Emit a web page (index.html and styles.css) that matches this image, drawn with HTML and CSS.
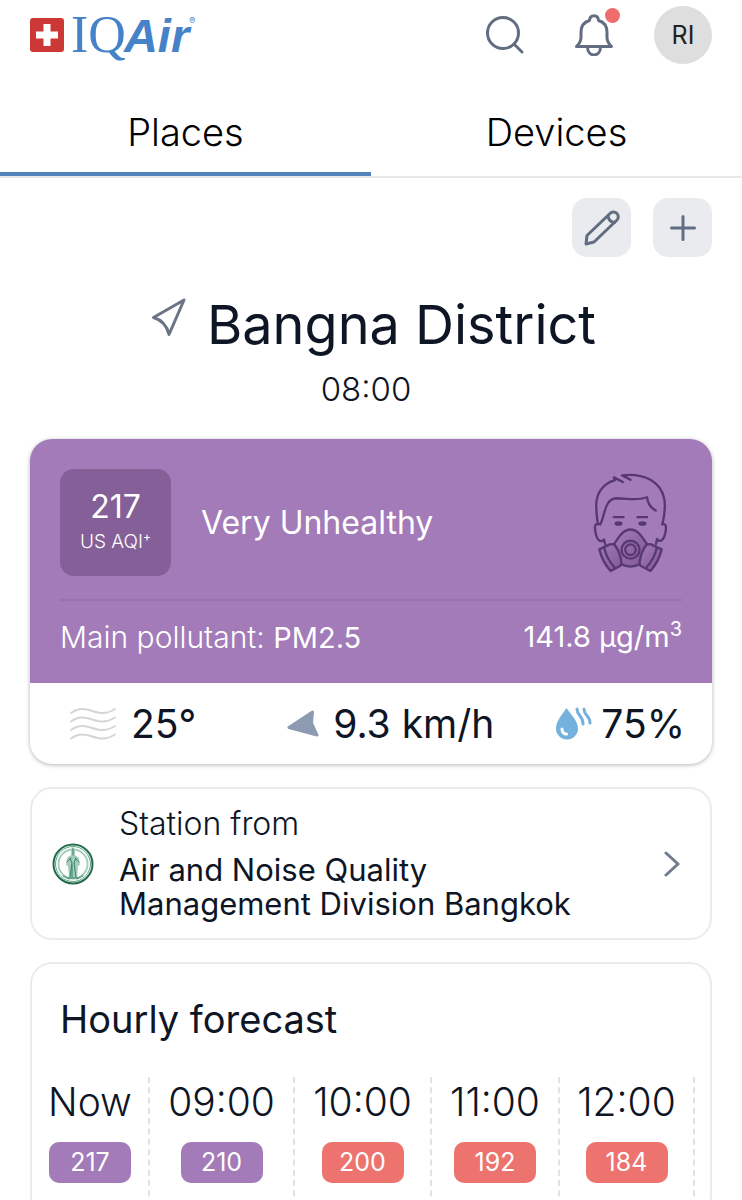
FILE: index.html
```html
<!DOCTYPE html>
<html lang="en">
<head>
  <meta charset="UTF-8">
  <meta name="viewport" content="width=device-width, initial-scale=1.0">
  <title>IQAir</title>
  <link rel="stylesheet" href="styles.css">
</head>
<body>
  <header class="header">
    <a href="#" class="logo">
      <svg class="logo-flag" viewBox="0 0 34 34" aria-hidden="true">
        <rect width="34" height="34" rx="3" fill="#cc3835"/>
        <path d="M13.500 6h7v7.500H28v7h-7.500V28h-7v-7.500H6v-7h7.500z" fill="#fff"/>
      </svg>
      <span class="logo-text"><span class="logo-iq">IQ</span><span class="logo-air">Air</span><sup>®</sup></span>
    </a>
    <div class="header-actions">
      <button class="icon-btn" aria-label="Search">
        <svg width="40" height="40" viewBox="0 0 40 40">
          <circle cx="18" cy="18" r="15.500"/>
          <path d="M29 29l8 8"/>
        </svg>
      </button>
      <button class="icon-btn" aria-label="Notifications">
        <svg width="40" height="42" viewBox="0 0 40 42">
          <path d="M2.500 32.500c3-3 4.500-5 4.500-9v-5C7 12 10 8 15.500 6.500c.5-6.500 8.500-6.500 9 0C30 8 33 12 33 18.500v5c0 4 1.500 6 4.500 9z"/>
          <path d="M13.500 33c0 10.500 13 10.500 13 0"/>
        </svg>
        <span class="dot"></span>
      </button>
      <button class="avatar">RI</button>
    </div>
  </header>

  <nav class="tabs">
    <a href="#" class="tab active">Places</a>
    <a href="#" class="tab">Devices</a>
  </nav>

  <main class="main">
    <div class="toolbar">
      <button class="tool-btn" aria-label="Edit places">
        <svg width="36" height="36" viewBox="0 0 36 36">
          <path d="M2 34l1-8.500L26 3.500a4.600 4.600 0 0 1 7 6.500L10 32z"/>
          <path d="M24 6c.5 4 2.500 6 6.500 6.500"/>
        </svg>
      </button>
      <button class="tool-btn" aria-label="Add place">
        <svg width="36" height="36" viewBox="0 0 36 36">
          <path d="M18 6.500v23M6.500 18h23"/>
        </svg>
      </button>
    </div>

    <section class="location">
      <h1>
        <svg class="location-arrow" viewBox="0 0 36 40" aria-hidden="true">
          <path d="M33 2L2.500 19.500C11 22 16 28 18 36.500z"/>
        </svg>
        Bangna District
      </h1>
      <time>08:00</time>
    </section>

    <section class="aqi-card">
      <div class="aqi-top">
        <div class="aqi-status">
          <div class="aqi-box">
            <span class="aqi-value">217</span>
            <span class="aqi-unit">US AQI<sup>+</sup></span>
          </div>
          <span class="aqi-level">Very Unhealthy</span>
          <svg class="aqi-face" viewBox="96 60 232 308" aria-hidden="true">
            <defs>
              <linearGradient id="mask" x1="0" y1="0" x2="1" y2="1">
                <stop offset="0" stop-color="#a27bb8"/>
                <stop offset="1" stop-color="#7f5698"/>
              </linearGradient>
            </defs>
            <!-- hair and head -->
            <path d="M189 92L162 78l3 8C124 98 106 132 109 172c1 18 2 32 5 47h7"/>
            <path d="M212 85l-25-13c64-8 117 18 127 72 4 26 0 50-6 75"/>
            <path d="M121 219c14-24 12-76 48-78 34 0 60 9 93-3 2 20 12 32 26 40"/>
            <!-- ears and jaw -->
            <path d="M114 219c-13-2-9 15-6 31 3 13 10 22 20 20l4-5 4 15"/>
            <path d="M308 219c14-3 12 15 8 30-3 14-9 22-19 20l-5-5-3 14"/>
            <path d="M162 198h29M233 198h29"/>
            <g class="solid">
              <ellipse cx="176" cy="217" rx="12" ry="7"/>
              <ellipse cx="248" cy="217" rx="12" ry="7"/>
            </g>
            <!-- respirator -->
            <path d="M162 279c12-15 24-44 50-44s38 29 50 44c-14 17-20 37-21 60-20 11-38 11-58 0-1-23-7-43-21-60z" fill="url(#mask)"/>
            <path d="M118 295l32-15c6-2 11-1 15 3 12 16 18 34 20 54 0 4-2 7-6 9l-27 14c-18-20-28-41-34-65zM132 288c5 24 17 45 34 64" fill="url(#mask)"/>
            <path d="M306 295l-32-15c-6-2-11-1-15 3-12 16-18 34-20 54 0 4 2 7 6 9l27 14c18-20 28-41 34-65zM292 288c-5 24-17 45-34 64" fill="url(#mask)"/>
            <circle cx="212" cy="296" r="27"/>
            <circle cx="212" cy="296" r="16"/>
          </svg>
        </div>
        <div class="pollutant">
          <span>Main pollutant: <b>PM2.5</b></span>
          <b>141.8 µg/m<sup>3</sup></b>
        </div>
      </div>
      <div class="weather">
        <div class="weather-item">
          <svg class="haze" viewBox="0 0 48 34" aria-hidden="true">
            <path d="M2 6c17-12 25 8 44-4M2 14.500c17-12 25 8 44-4M2 23c17-12 25 8 44-4M2 31.500c17-12 25 8 44-4"/>
          </svg>
          <span>25°</span>
        </div>
        <div class="weather-item wind-item">
          <svg class="wind" viewBox="0 0 32 28" aria-hidden="true">
            <path d="M2 17.500L25.500 2l-1 11L30 25z"/>
          </svg>
          <span>9.3 km/h</span>
        </div>
        <div class="weather-item">
          <svg class="drop" viewBox="0 0 38 34" aria-hidden="true">
            <path d="M11.500 1C7 8 1 14 1 21.500a11 11 0 0 0 22 0C23 14 16 8 11.500 1z" fill="#74b1dc"/>
            <path d="M7 22c0 3 2 5 4.500 5" stroke="#fff"/>
            <path d="M22 2c0 7 6 6 6 15M29 2c0 7 6 6 6 14" stroke="#74b1dc"/>
          </svg>
          <span>75%</span>
        </div>
      </div>
    </section>

    <a href="#" class="station">
      <svg class="station-logo" viewBox="0 0 42 42" aria-hidden="true">
        <circle cx="21" cy="21" r="19.500" fill="#fff" stroke="#236a4c" stroke-width="2"/>
        <circle cx="21" cy="21" r="17.500" fill="none" stroke="#5ea385" stroke-width="1"/>
        <circle cx="21" cy="21" r="14.500" fill="none" stroke="#a5cdbb" stroke-width="2" stroke-dasharray="1 1"/>
        <path d="M21 5l2 3v4l4 3 1 7-2 1-1 13h-8l-1-13-2-1 1-7 4-3V8z" fill="#a5cdbb"/>
        <path d="M21 5v7M18 15l2 5-2 14M24 15l-2 5 2 14M15 19l4-4M27 19l-4-4M20 22v12M11 33l6 3M31 33l-6 3M16 35h10" fill="none" stroke="#378565" stroke-width="1"/>
      </svg>
      <span class="station-text">
        <span>Station from</span>
        <strong>Air and Noise Quality Management Division Bangkok</strong>
      </span>
      <svg class="chevron" viewBox="0 0 16 26" aria-hidden="true">
        <path d="M2 2l12 11L2 24"/>
      </svg>
    </a>

    <section class="forecast">
      <h2>Hourly forecast</h2>
      <ul class="hours">
        <li><span>Now</span><b class="pill purple">217</b></li>
        <li><span>09:00</span><b class="pill purple">210</b></li>
        <li><span>10:00</span><b class="pill red">200</b></li>
        <li><span>11:00</span><b class="pill red">192</b></li>
        <li><span>12:00</span><b class="pill red">184</b></li>
      </ul>
    </section>
  </main>
</body>
</html>
```
FILE: styles.css
```css
* {
  box-sizing: border-box;
}
body {
  margin: 0;
  background: #fff;
  color: #0e1525;
  font-family: Inter, "Liberation Sans", sans-serif;
  font-weight: 300;
}
a {
  color: inherit;
  text-decoration: none;
}
button {
  border: none;
  padding: 0;
  font: inherit;
  cursor: pointer;
}
b, strong {
  font-weight: 400;
}
svg {
  display: block;
  flex-shrink: 0;
  fill: none;
  stroke-linecap: round;
  stroke-linejoin: round;
}

/* header */
.header {
  display: flex;
  justify-content: space-between;
  align-items: center;
  height: 70px;
  padding: 0 30px;
}
.logo {
  display: flex;
  align-items: center;
  gap: 7px;
  color: #4682c8;
}
.logo-flag {
  width: 34px;
  height: 34px;
}
.logo-text {
  display: flex;
  align-items: baseline;
  line-height: 56px;
}
.logo-iq {
  font-family: "Liberation Serif", serif;
  font-size: 52px;
  font-weight: 400;
}
.logo-air {
  margin-left: -2px;
  font-family: "Liberation Sans", sans-serif;
  font-size: 47px;
  font-weight: 700;
  font-style: italic;
}
.logo-text sup {
  align-self: flex-start;
  font-size: 9px;
  font-weight: 400;
  line-height: 28px;
}
.header-actions {
  display: flex;
  align-items: center;
}
.icon-btn {
  position: relative;
  margin-right: 49px;
  background: none;
}
.icon-btn + .icon-btn {
  margin-right: 40px;
}
.icon-btn svg, .tool-btn svg {
  stroke: #626d82;
  stroke-width: 3;
}
.dot {
  position: absolute;
  top: -6px;
  right: -6px;
  width: 15px;
  height: 15px;
  border-radius: 50%;
  background: #ee6c6c;
}
.avatar {
  width: 58px;
  height: 58px;
  border-radius: 50%;
  background: #dedede;
  color: #222;
  font-size: 25px;
  font-weight: 400;
}

/* tabs */
.tabs {
  display: flex;
  height: 108px;
  border-bottom: 2px solid #e8e8ea;
}
.tab {
  flex: 1;
  padding-top: 34px;
  height: 106px;
  color: #000;
  font-size: 38px;
  line-height: 56px;
  text-align: center;
}
.tab.active {
  border-bottom: 4px solid #5283bd;
}

.main {
  padding: 20px 30px 0;
}
.toolbar {
  display: flex;
  justify-content: flex-end;
  gap: 22px;
}
.tool-btn {
  display: flex;
  align-items: center;
  justify-content: center;
  width: 59px;
  height: 59px;
  border-radius: 15px;
  background: #e9ebef;
}

/* location */
.location {
  padding-top: 34px;
  text-align: center;
}
.location h1 {
  display: flex;
  justify-content: center;
  gap: 20px;
  margin: 0;
  padding-left: 5px;
  font-size: 54px;
  font-weight: 400;
  line-height: 68px;
}
.location-arrow {
  width: 36px;
  height: 40px;
  margin-top: 7px;
  stroke: #6b7485;
  stroke-width: 3;
}
.location time {
  display: block;
  padding: 8px 10px 0 0;
  font-size: 33px;
  line-height: 44px;
}

/* air quality */
.aqi-card {
  margin-top: 28px;
  border-radius: 22px;
  box-shadow: 0 1px 4px rgba(0, 0, 0, 0.3);
  overflow: hidden;
}
.aqi-top {
  padding: 30px 30px 23px;
  background: #a27bb8;
  color: #fff;
}
.aqi-status {
  display: flex;
  align-items: center;
  gap: 30px;
  padding-bottom: 23px;
  border-bottom: 2px solid #9a70ad;
}
.aqi-box {
  display: flex;
  flex-direction: column;
  align-items: center;
  justify-content: center;
  width: 111px;
  height: 107px;
  border-radius: 14px;
  background: #845f98;
}
.aqi-value {
  font-size: 32px;
  font-weight: 400;
  line-height: 42px;
}
.aqi-unit {
  padding-bottom: 3px;
  font-size: 19px;
  line-height: 28px;
}
.aqi-unit sup {
  font-size: 12px;
  font-weight: 400;
  line-height: 0;
}
.aqi-level {
  flex: 1;
  font-size: 32px;
  font-weight: 400;
}
.aqi-face {
  width: 77px;
  height: 103px;
  margin-right: 13px;
  stroke: #583870;
  stroke-width: 7;
}
.aqi-face .solid {
  fill: #583870;
  stroke: none;
}
.pollutant {
  display: flex;
  justify-content: space-between;
  padding-top: 14px;
  font-size: 30px;
  line-height: 44px;
}
.pollutant b {
  font-size: 29px;
}
.pollutant sup {
  font-size: 20px;
  line-height: 0;
}
.weather {
  display: flex;
  justify-content: space-between;
  align-items: center;
  height: 81px;
  padding: 0 27px 0 39px;
  font-size: 39px;
  font-weight: 400;
}
.weather-item {
  display: flex;
  align-items: center;
  gap: 14px;
}
.weather-item:last-child {
  gap: 8px;
}
.wind-item {
  padding-left: 30px;
}
.haze {
  width: 48px;
  height: 34px;
  stroke: #d2d6da;
  stroke-width: 2;
}
.wind {
  width: 32px;
  height: 28px;
  fill: #8c9bb1;
  stroke: #8c9bb1;
  stroke-width: 3;
}
.drop {
  width: 38px;
  height: 34px;
  stroke-width: 3;
}

/* station */
.station {
  display: flex;
  align-items: center;
  margin-top: 23px;
  padding: 0 30px 0 20px;
  border: 2px solid #ebebee;
  border-radius: 22px;
}
.station-logo {
  width: 42px;
  height: 42px;
}
.station-text {
  flex: 1;
  padding: 18px 80px 17px 25px;
  font-size: 32px;
  line-height: 34px;
}
.station-text span,
.station-text strong {
  display: block;
}
.station-text strong {
  padding-top: 12px;
  font-size: 31px;
}
.chevron {
  width: 16px;
  height: 26px;
  stroke: #6f7a8d;
  stroke-width: 3;
}

/* forecast */
.forecast {
  margin-top: 22px;
  border: 2px solid #ebebee;
  border-radius: 22px;
  overflow: hidden;
}
.forecast h2 {
  margin: 0;
  padding: 29px 28px 32px;
  font-size: 38px;
  font-weight: 400;
  line-height: 52px;
}
.hours {
  display: grid;
  grid-template-columns: 118fr 145fr 137fr 128fr 135fr;
  margin: 0 15px 0 0;
  padding: 0;
  list-style: none;
}
.hours li {
  display: flex;
  flex-direction: column;
  align-items: center;
  gap: 15px;
  height: 140px;
  border-right: 2px dashed #e2e2e5;
  font-size: 39px;
  line-height: 50px;
}
.pill {
  width: 82px;
  border-radius: 10px;
  color: #fff;
  font-size: 25px;
  line-height: 41px;
  text-align: center;
}
.purple {
  background: #a27bb8;
}
.red {
  background: #ec736e;
}
```
